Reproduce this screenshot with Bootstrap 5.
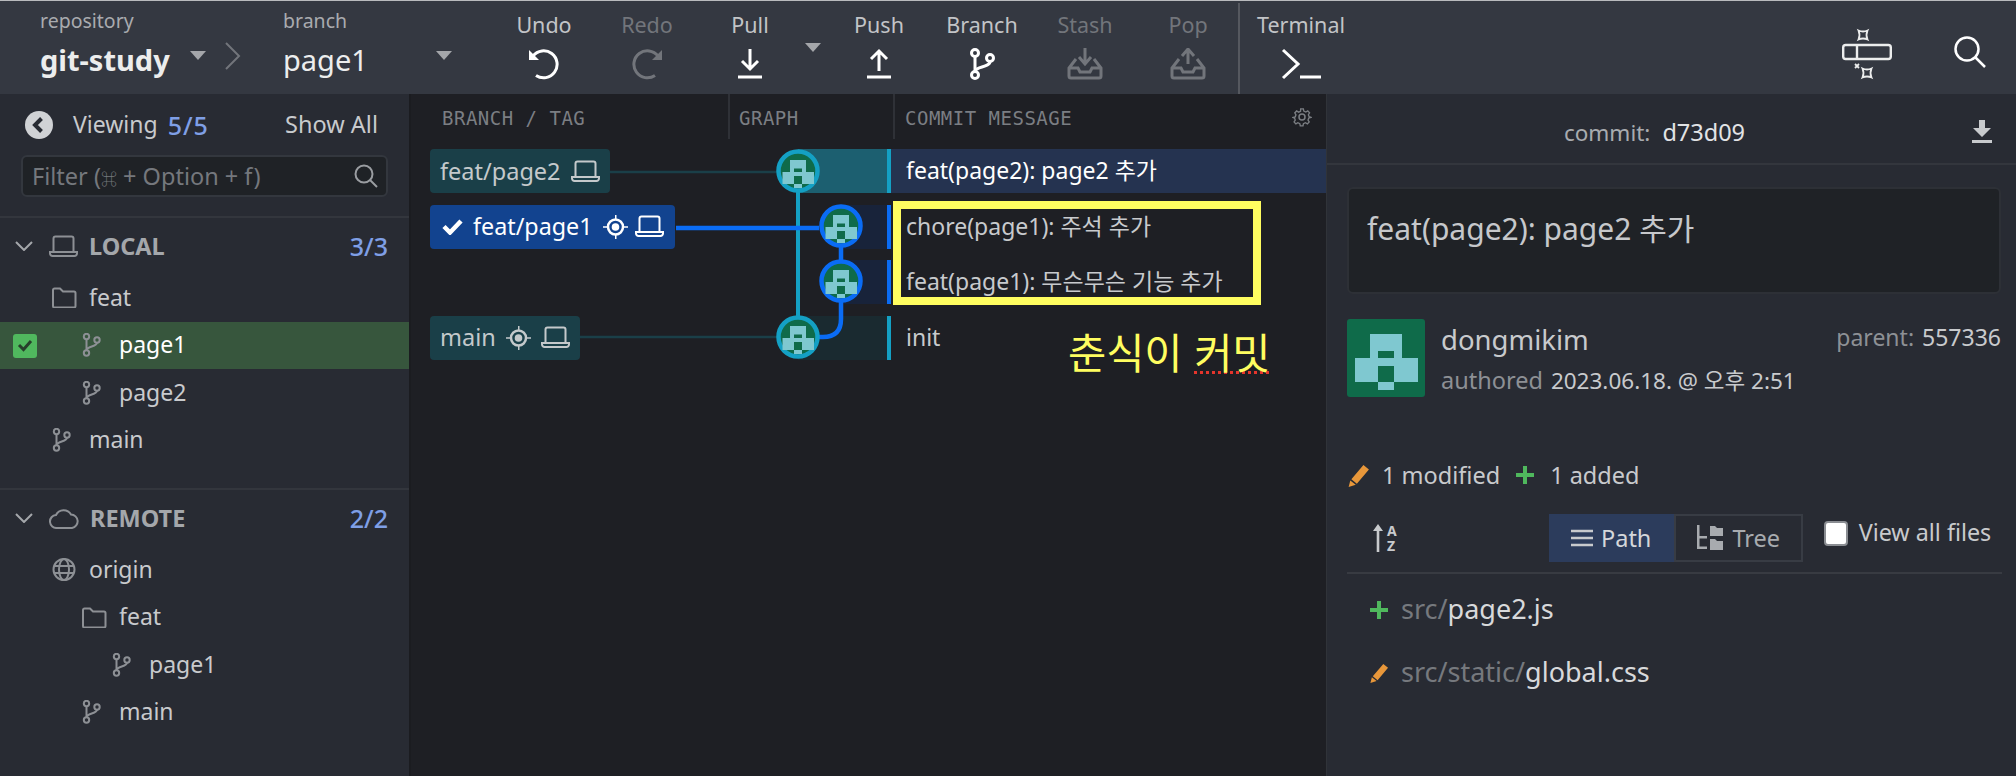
<!DOCTYPE html>
<html lang="ko">
<head>
    <meta charset="UTF-8" />
    <title>git-study</title>
    <link href="https://cdn.jsdelivr.net/npm/bootstrap@5.3.0/dist/css/bootstrap.min.css" rel="stylesheet" />
    <style>
        html, body { height: 100%; }
        body {
            background: #1e1f24;
            color: #c8cacd;
            font-family: "Noto Sans", "Noto Sans CJK KR", sans-serif;
            font-size: 23px;
            line-height: 1.2;
            overflow: hidden;
        }
        svg { display: block; flex: none; }
        .app-shell { height: 776px; }

        /* toolbar */
        .top-bar { height: 94px; background: #343841; padding-left: 40px; border-top: 1px solid #b9babd; }
        .repo-box { width: 243px; padding-top: 8px; }
        .branch-box { width: 209.5px; padding-top: 8px; }
        .sel-label { font-size: 19.5px; color: #a9abaf; line-height: 24px; }
        .sel-value { font-size: 29px; color: #eceded; line-height: 37px; margin-top: 8px; white-space: nowrap; }
        .sel-caret { width: 0; height: 0; border-left: 8px solid transparent; border-right: 8px solid transparent; border-top: 9px solid #a4a6aa; }
        .repo-caret { margin-left: 20px; }
        .repo-arrow { margin-left: 19px; }
        .branch-caret { margin-left: auto; margin-right: 41px; }
        .tool-btn { width: 103px; padding-top: 11px; color: #c2c4c7; font-size: 21.5px; line-height: 26px; }
        .tool-btn svg { margin-top: 10px; }
        .tool-off { color: #72757b; }
        .caret-box { width: 26px; padding: 42px 4px 0 0; }
        .tool-sep { width: 2px; background: #55585f; margin: 2px 0 0 -1.5px; }
        .term-btn { width: 122px; }
        .top-right { margin-left: auto; padding: 8px 30px 0 0; gap: 62px; }

        /* sidebar */
        .side-panel { width: 411px; background: #282b33; flex: none; border-right: 2px solid #1b1c20; }
        .view-row { height: 61px; padding: 0 31px 0 25px; }
        .show-all { font-size: 23.5px; }
        .count-txt { color: #7f9fe6; font-size: 25px; font-weight: 500; }
        .view-count { margin-left: 10px; letter-spacing: 1px; }
        .filter-box { height: 42px; margin: 0 21px; background: #1f2226; border: 2px solid #33373e; border-radius: 6px; padding: 0 8px 0 9px; color: #75787d; font-size: 23.5px; }
        .filter-key { font-size: 16px; }
        .side-sep { height: 2px; background: #33363d; }
        .side-top { margin-top: 19px; }
        .side-head { height: 56px; padding: 0 21px 0 15px; color: #a4a7ab; font-weight: 700; font-size: 23.5px; }
        .head-ico { color: #8d9095; margin-left: 16px; }
        .head-txt { margin-left: 11px; }
        .side-item { height: 47.5px; color: #c8cacd; }
        .side-sel { background: #37563d; color: #fff; position: relative; }
        .side-check { position: absolute; left: 13px; top: 12px; width: 24px; height: 24px; border-radius: 3px; background: #50b85e; }
        .lv-1 { padding-left: 52px; }
        .lv-2 { padding-left: 82px; }
        .lv-3 { padding-left: 112px; }
        .item-ico { width: 37px; flex: none; }
        .side-gap { height: 24px; }

        /* graph */
        .graph-panel { width: 915px; flex: none; position: relative; background: #1e1f24; }
        .col-head { height: 55px; color: #7b7e83; font-family: "DejaVu Sans Mono", "Liberation Mono", monospace; font-size: 19px; letter-spacing: .5px; }
        .col-branch { width: 317px; padding: 13px 0 0 31px; }
        .col-graph { width: 165px; padding: 13px 0 0 9px; border-left: 2px solid #2f3137; height: 45px; }
        .col-msg { flex: 1; padding: 13px 14px 0 10px; border-left: 2px solid #2f3137; height: 45px; }
        .commit-row { height: 44px; margin-bottom: 11.5px; }
        .ref-cell { width: 317px; padding-left: 19px; flex: none; }
        .ref-tag { height: 44px; padding: 0 10px; border-radius: 4px; background: #1a3f48; color: #c4c9cb; font-size: 23.5px; gap: 10px; }
        .ref-active { background: #12438f; color: #fff; padding: 0 11px 0 12px; font-size: 23.3px; }
        .ref-laptop { margin-left: -3px; }
        .stripe-cell { width: 163px; flex: none; height: 44px; }
        .stripe { height: 44px; border-right: 4px solid #14a0c4; }
        .stripe-cur { margin-left: 70px; background: #1c5f70; }
        .stripe-off { margin-left: 70px; background: #1a2a30; }
        .stripe-blue { margin-left: 113px; background: #18233a; border-right-color: #0a6cf5; }
        .msg-cell { flex: 1; padding-left: 15px; font-size: 23px; color: #c8cacd; height: 44px; }
        .msg-on { background: #253350; color: #fff; }
        .graph-lines { position: absolute; left: 0; top: 0; pointer-events: none; }
        .note-box { position: absolute; left: 482px; top: 107px; width: 368px; height: 104px; border: 8px solid #fffd60; }
        .note-txt { position: absolute; left: 657px; top: 232px; color: #fffd60; font-size: 41.5px; line-height: 50px; font-family: "Noto Sans CJK KR", sans-serif; white-space: nowrap; }
        .note-typo { text-decoration: underline dotted #e5352c 3px; text-underline-offset: 2px; }

        /* detail */
        .detail-panel { flex: 1; background: #282b33; border-left: 1px solid #303339; }
        .commit-bar { height: 71px; color: #a8abaf; font-size: 22.5px; position: relative; border-bottom: 2px solid #33363d; padding: 8px 34px 0 0; }
        .commit-bar b { font-weight: 400; font-size: 23.5px; color: #e2e3e5; margin-left: 12px; }
        .dl-ico { position: absolute; right: 24px; top: 26px; }
        .msg-box { height: 107px; margin: 22px 15px 0 20px; background: #1f2226; border: 2px solid #2d3036; border-radius: 6px; padding: 22px 18px; font-size: 30px; color: #c6c8cb; }
        .author-row { margin: 25px 15px 0 20px; height: 78px; position: relative; }
        .avatar-big { width: 78px; height: 78px; border-radius: 3px; flex: none; }
        .author-info { margin-left: 16px; }
        .author-name { font-size: 27.5px; line-height: 32px; margin-top: 5px; }
        .author-date { font-size: 22.5px; line-height: 30px; margin-top: 9px; }
        .dim-txt { color: #8d9095; }
        .author-date .dim-txt { font-size: 23.5px; }
        .parent-txt { position: absolute; right: 0; top: 4px; font-size: 23px; line-height: 28px; }
        .stat-row { margin: 63px 0 0 20px; height: 30px; font-size: 23.5px; }
        .view-bar { height: 48px; margin: 24px 15px 0 46px; position: relative; }
        .sort-az { font-size: 14px; font-weight: 700; line-height: 15px; margin-left: 4px; color: #c8cacd; }
        .path-group { margin-left: 152px; height: 48px; width: 254px; font-size: 23.5px; }
        .path-on { width: 125px; background: #2c3c5c; color: #d5d7da; gap: 8px; }
        .path-off { flex: 1; border: 2px solid #383c44; color: #a8abaf; gap: 8px; }
        .view-check { width: 24px; height: 25px; background: #fff; border: 2px solid #8a8d92; border-radius: 4px; margin-left: 21px; margin-top: -10px; flex: none; }
        .view-lbl { margin-left: 11px; font-size: 23.3px; margin-top: -10px; white-space: nowrap; }
        .file-sep { height: 2px; background: #383b42; margin: 10px 14px 4px 20px; }
        .file-row { height: 63px; padding-left: 42px; font-size: 27px; color: #d8d9db; gap: 12px; }
        .file-dim { color: #76797e; }
    </style>
</head>
<body>

<svg width="0" height="0" class="position-absolute">
    <defs>
        <g id="ico-branch" fill="none" stroke="currentColor" stroke-width="2">
            <circle cx="4.5" cy="3.5" r="2.7"/><circle cx="4.5" cy="20" r="2.7"/><circle cx="15" cy="7" r="2.7"/>
            <path d="M4.5 6.2V17.3M15 9.7c0 4-10.5 3.6-10.5 7.6"/>
        </g>
        <g id="ico-laptop" fill="none" stroke="currentColor" stroke-width="2">
            <path d="M4.5 16V3.5a2 2 0 0 1 2-2h16a2 2 0 0 1 2 2V16"/>
            <path d="M1 17h27v1.5a2.5 2.5 0 0 1-2.5 2.5H3.5a2.5 2.5 0 0 1-2.5-2.5z"/>
        </g>
        <g id="ico-target" fill="currentColor">
            <path d="M12 0h1.5v5h-1.5zM12 19h1.5v5h-1.5zM0 11.2h5v1.6h-5zM20 11.2h5v1.6h-5z"/>
            <circle cx="12.5" cy="12" r="7.5" fill="none" stroke="currentColor" stroke-width="2.5"/>
            <circle cx="12.5" cy="12" r="3.8" />
        </g>
        <g id="ico-folder" fill="none" stroke="currentColor" stroke-width="2">
            <path d="M1 19V3a1.5 1.5 0 0 1 1.5-1.5h5.5l3 3h11a1.5 1.5 0 0 1 1.5 1.5v13a1.5 1.5 0 0 1-1.5 1.5h-19.500a1.5 1.5 0 0 1-1.5-1.5z"/>
        </g>
        <g id="ico-identicon">
            <path fill="#7fc8d0" d="M23 15h32v24h-32zM8 39h63v24h-63zM31 63h16v8h-16z"/>
            <path fill="#0f6b4a" d="M31 32h16v7h-16zM31 47h16v16h-16z"/>
        </g>
        <g id="ico-pencil" fill="#e8973a">
            <path d="M15 1l5 4-11 13-5-4zM3 15l5 4-6.5 2z"/>
        </g>
        <g id="ico-plus" fill="#4fb85d">
            <path d="M7 0h4v7h7v4h-7v7h-4v-7h-7v-4h7z"/>
        </g>
    </defs>
</svg>

<div class="app-shell d-flex flex-column">
    <header class="top-bar d-flex flex-shrink-0">
        <div class="repo-box">
            <div class="sel-label">repository</div>
            <div class="d-flex align-items-center">
                <div class="sel-value fw-bold">git-study</div>
                <div class="sel-caret repo-caret"></div>
                <svg class="repo-arrow" width="16" height="28" viewBox="0 0 16 28" fill="none" stroke="#72757b" stroke-width="2"><path d="M1 1l13 13L1 27"/></svg>
            </div>
        </div>
        <div class="branch-box">
            <div class="sel-label">branch</div>
            <div class="d-flex align-items-center">
                <div class="sel-value">page1</div>
                <div class="sel-caret branch-caret"></div>
            </div>
        </div>
        <div class="tool-btn d-flex flex-column align-items-center">Undo
            <svg width="34" height="32" viewBox="0 0 34 32" fill="none" stroke="#fff" stroke-width="3"><path d="M6 8A13.5 13.5 0 1 1 9 27.5"/><path d="M2 2v10h10z" fill="#fff" stroke="none"/></svg>
        </div>
        <div class="tool-btn tool-off d-flex flex-column align-items-center">Redo
            <svg width="34" height="32" viewBox="0 0 34 32" fill="none" stroke="#72757b" stroke-width="3"><path d="M28 8A13.5 13.5 0 1 0 25 27.5"/><path d="M32 2v10h-10z" fill="#72757b" stroke="none"/></svg>
        </div>
        <div class="tool-btn d-flex flex-column align-items-center">Pull
            <svg width="24" height="32" viewBox="0 0 24 32" fill="none" stroke="#fff" stroke-width="3"><path d="M12 1v20M4 13l8 8 8-8M0 29h24"/></svg>
        </div>
        <div class="caret-box d-flex justify-content-center"><div class="sel-caret"></div></div>
        <div class="tool-btn d-flex flex-column align-items-center">Push
            <svg width="24" height="32" viewBox="0 0 24 32" fill="none" stroke="#fff" stroke-width="3"><path d="M12 23V3M4 11l8-8 8 8M0 29h24"/></svg>
        </div>
        <div class="tool-btn d-flex flex-column align-items-center">Branch
            <svg width="26" height="32" viewBox="0 0 26 32" fill="none" stroke="#fff" stroke-width="3"><circle cx="6" cy="5" r="3.5"/><circle cx="6" cy="27" r="3.5"/><circle cx="21" cy="10" r="3.5"/><path d="M6 8.5v15M21 13.5c0 6-15 5-15 10"/></svg>
        </div>
        <div class="tool-btn tool-off d-flex flex-column align-items-center">Stash
            <svg width="36" height="32" viewBox="0 0 36 32" fill="none" stroke="#72757b" stroke-width="3"><path d="M18 0v14M12 9l6 7 6-7" /><path d="M9 11l-7 9v8a2 2 0 0 0 2 2h28a2 2 0 0 0 2-2v-8l-7-9M2 20h9l2 4h10l2-4h9"/></svg>
        </div>
        <div class="tool-btn tool-off d-flex flex-column align-items-center">Pop
            <svg width="36" height="32" viewBox="0 0 36 32" fill="none" stroke="#72757b" stroke-width="3"><path d="M18 16V2M12 8l6-7 6 7" /><path d="M9 11l-7 9v8a2 2 0 0 0 2 2h28a2 2 0 0 0 2-2v-8l-7-9M2 20h9l2 4h10l2-4h9"/></svg>
        </div>
        <div class="tool-sep"></div>
        <div class="tool-btn term-btn d-flex flex-column align-items-center">Terminal
            <svg width="40" height="32" viewBox="0 0 40 32" fill="none" stroke="#fff" stroke-width="3"><path d="M2 2l15 14L2 30M19 29h21"/></svg>
        </div>
        <div class="top-right d-flex align-items-center">
            <svg width="50" height="60" viewBox="0 0 50 60" fill="none" stroke="#eceded"><rect x="1.2" y="23" width="47.6" height="14" rx="2.5" stroke-width="2.4"/><path d="M15 23v14" stroke-width="2.4"/><path d="M16.5 8.500q4.500 2 9 0q-2 4.500 0 9q-4.500-2-9 0q2-4.500 0-9z" stroke-width="1.8"/><path d="M20.5 46.500q4.500 2 9 0q-2 4.500 0 9q-4.500-2-9 0q2-4.500 0-9z" stroke-width="1.8"/><path d="M13 42l4 4M17 42l-4 4" stroke-width="1.8"/></svg>
            <svg width="32" height="32" viewBox="0 0 32 32" fill="none" stroke="#fff" stroke-width="2.5"><circle cx="13" cy="13" r="11.5"/><path d="M21 21l10 10"/></svg>
        </div>
    </header>

    <div class="d-flex flex-grow-1">
        <aside class="side-panel">
            <div class="view-row d-flex align-items-center">
                <svg width="28" height="28" viewBox="0 0 28 28"><circle cx="14" cy="14" r="14" fill="#d0d2d5"/><path d="M16.5 7.5L10 14l6.5 6.5" fill="none" stroke="#282b33" stroke-width="4"/></svg>
                <span class="ms-3 ps-1">Viewing</span><span class="count-txt view-count">5/5</span>
                <span class="ms-auto show-all">Show All</span>
            </div>
            <div class="filter-box d-flex align-items-center">
                <span>Filter (<span class="filter-key">⌘</span> + Option + f)</span>
                <svg class="ms-auto" width="24" height="24" viewBox="0 0 24 24" fill="none" stroke="#9a9da1" stroke-width="2"><circle cx="10" cy="10" r="8.5"/><path d="M16 16l7 7"/></svg>
            </div>
            <div class="side-sep side-top"></div>
            <div class="side-head d-flex align-items-center">
                <svg width="18" height="10" viewBox="0 0 18 10" fill="none" stroke="#a4a7ab" stroke-width="2"><path d="M1 1l8 8 8-8"/></svg>
                <svg class="head-ico" width="29" height="22" viewBox="0 0 29 22"><use href="#ico-laptop"/></svg>
                <span class="head-txt">LOCAL</span>
                <span class="count-txt ms-auto">3/3</span>
            </div>
            <div class="side-item lv-1 d-flex align-items-center">
                <svg class="item-ico dim-txt" height="21" viewBox="0 0 37 21"><use href="#ico-folder"/></svg>feat
            </div>
            <div class="side-item side-sel lv-2 d-flex align-items-center">
                <span class="side-check d-flex align-items-center justify-content-center">
                    <svg width="16" height="13" viewBox="0 0 16 13" fill="none" stroke="#27402b" stroke-width="3"><path d="M2 6l4.5 4.5L14 2"/></svg>
                </span>
                <svg class="item-ico dim-txt" height="24" viewBox="0 0 37 24"><use href="#ico-branch"/></svg>page1
            </div>
            <div class="side-item lv-2 d-flex align-items-center">
                <svg class="item-ico dim-txt" height="24" viewBox="0 0 37 24"><use href="#ico-branch"/></svg>page2
            </div>
            <div class="side-item lv-1 d-flex align-items-center">
                <svg class="item-ico dim-txt" height="24" viewBox="0 0 37 24"><use href="#ico-branch"/></svg>main
            </div>
            <div class="side-gap"></div>
            <div class="side-sep"></div>
            <div class="side-head d-flex align-items-center">
                <svg width="18" height="10" viewBox="0 0 18 10" fill="none" stroke="#a4a7ab" stroke-width="2"><path d="M1 1l8 8 8-8"/></svg>
                <svg class="head-ico" width="30" height="21" viewBox="0 0 30 21" fill="none" stroke="currentColor" stroke-width="2"><path d="M8 20a6.5 6.5 0 0 1-1-13A8.5 8.5 0 0 1 22 6.5 6.800 6.800 0 0 1 23 20z"/></svg>
                <span class="head-txt">REMOTE</span>
                <span class="count-txt ms-auto">2/2</span>
            </div>
            <div class="side-item lv-1 d-flex align-items-center">
                <svg class="item-ico dim-txt" height="23" viewBox="0 0 37 23" fill="none" stroke="currentColor" stroke-width="2"><circle cx="12" cy="11.5" r="10.5"/><ellipse cx="12" cy="11.5" rx="5" ry="10.5"/><path d="M2 8h20M2 15h20"/></svg>origin
            </div>
            <div class="side-item lv-2 d-flex align-items-center">
                <svg class="item-ico dim-txt" height="21" viewBox="0 0 37 21"><use href="#ico-folder"/></svg>feat
            </div>
            <div class="side-item lv-3 d-flex align-items-center">
                <svg class="item-ico dim-txt" height="24" viewBox="0 0 37 24"><use href="#ico-branch"/></svg>page1
            </div>
            <div class="side-item lv-2 d-flex align-items-center">
                <svg class="item-ico dim-txt" height="24" viewBox="0 0 37 24"><use href="#ico-branch"/></svg>main
            </div>
        </aside>

        <main class="graph-panel">
            <div class="col-head d-flex">
                <div class="col-branch">BRANCH / TAG</div>
                <div class="col-graph">GRAPH</div>
                <div class="col-msg d-flex justify-content-between">COMMIT MESSAGE
                    <svg width="20" height="20" viewBox="0 0 20 20" fill="none" stroke="#7b7e83" stroke-width="1.5"><circle cx="10" cy="10" r="3"/><path d="M8.5 1h3l.5 2.5 2.2 1 2.2-1.3 2 2.2-1.3 2.1.8 2.2L20 10.5v0l-2.5.7-.8 2.2 1.3 2.1-2 2.2-2.2-1.3-2.2 1-.5 2.5h-3l-.5-2.5-2.2-1-2.2 1.3-2-2.2 1.3-2.1-.8-2.2L0 10.5v0l2.5-.7.8-2.2L2 5.5l2-2.2 2.2 1.3 2.2-1z" transform="translate(1 1) scale(.9)"/></svg>
                </div>
            </div>
            <div class="commit-row d-flex">
                <div class="ref-cell"><span class="ref-tag d-inline-flex align-items-center">feat/page2
                    <svg width="29" height="23" viewBox="0 0 29 23"><use href="#ico-laptop"/></svg></span></div>
                <div class="stripe-cell"><div class="stripe stripe-cur"></div></div>
                <div class="msg-cell msg-on d-flex align-items-center">feat(page2): page2 추가</div>
            </div>
            <div class="commit-row d-flex">
                <div class="ref-cell"><span class="ref-tag ref-active d-inline-flex align-items-center">
                    <svg width="21" height="17" viewBox="0 0 21 17" fill="none" stroke="#fff" stroke-width="4.5"><path d="M2 8.5l6 6L19 3"/></svg>
                    <span>feat/page1</span>
                    <svg width="25" height="24" viewBox="0 0 25 24"><use href="#ico-target"/></svg>
                    <svg class="ref-laptop" width="29" height="23" viewBox="0 0 29 23"><use href="#ico-laptop"/></svg></span></div>
                <div class="stripe-cell"><div class="stripe stripe-blue"></div></div>
                <div class="msg-cell d-flex align-items-center">chore(page1): 주석 추가</div>
            </div>
            <div class="commit-row d-flex">
                <div class="ref-cell"></div>
                <div class="stripe-cell"><div class="stripe stripe-blue"></div></div>
                <div class="msg-cell d-flex align-items-center">feat(page1): 무슨무슨 기능 추가</div>
            </div>
            <div class="commit-row d-flex">
                <div class="ref-cell"><span class="ref-tag d-inline-flex align-items-center">main
                    <svg width="25" height="24" viewBox="0 0 25 24"><use href="#ico-target"/></svg>
                    <svg width="29" height="23" viewBox="0 0 29 23"><use href="#ico-laptop"/></svg></span></div>
                <div class="stripe-cell"><div class="stripe stripe-off"></div></div>
                <div class="msg-cell d-flex align-items-center">init</div>
            </div>

            <svg class="graph-lines" width="915" height="300" viewBox="0 0 915 300" fill="none">
                <path d="M198 78H366M168 243H366" stroke="#1a3f48" stroke-width="2.5"/>
                <path d="M387 77V243" stroke="#14a0c4" stroke-width="4"/>
                <path d="M265 134H408M430 132V187M430 187V225q0 18-18 18h-6" stroke="#0a6cf5" stroke-width="4.5"/>
                <circle cx="387" cy="77" r="19.5" fill="#0f6b4a" stroke="#14a0c4" stroke-width="4.5"/>
                <use href="#ico-identicon" transform="translate(367.5 58.5) scale(.5)"/>
                <circle cx="430" cy="132" r="19.5" fill="#0f6b4a" stroke="#0a6cf5" stroke-width="4.5"/>
                <use href="#ico-identicon" transform="translate(410.5 113.5) scale(.5)"/>
                <circle cx="430" cy="187" r="19.5" fill="#0f6b4a" stroke="#0a6cf5" stroke-width="4.5"/>
                <use href="#ico-identicon" transform="translate(410.5 168.5) scale(.5)"/>
                <circle cx="387" cy="243" r="19.5" fill="#0f6b4a" stroke="#14a0c4" stroke-width="4.5"/>
                <use href="#ico-identicon" transform="translate(367.5 224.5) scale(.5)"/>
            </svg>
            <div class="note-box"></div>
            <div class="note-txt">춘식이 <span class="note-typo">커밋</span></div>
        </main>

        <section class="detail-panel">
            <div class="commit-bar d-flex align-items-center justify-content-center">commit:<b>d73d09</b>
                <svg class="dl-ico" width="20" height="24" viewBox="0 0 20 24" fill="#c8cacd"><path d="M7 0h6v8h6l-9 9-9-9h6zM0 20h20v3h-20z"/></svg>
            </div>
            <div class="msg-box">feat(page2): page2 추가</div>
            <div class="author-row d-flex">
                <svg class="avatar-big" viewBox="0 0 78 78"><rect width="78" height="78" fill="#0f6b4a"/><use href="#ico-identicon"/></svg>
                <div class="author-info">
                    <div class="author-name">dongmikim</div>
                    <div class="author-date"><span class="dim-txt">authored</span><span class="ms-2">2023.06.18. @ 오후 2:51</span></div>
                </div>
                <div class="parent-txt"><span class="dim-txt">parent:</span><span class="ms-2">557336</span></div>
            </div>
            <div class="stat-row d-flex align-items-center">
                <svg width="23" height="23" viewBox="0 0 21 21"><use href="#ico-pencil"/></svg>
                <span class="ms-2 ps-1">1 modified</span>
                <svg class="ms-3" width="18" height="18" viewBox="0 0 18 18"><use href="#ico-plus"/></svg>
                <span class="ms-3">1 added</span>
            </div>
            <div class="view-bar d-flex align-items-center">
                <div class="d-flex align-items-center">
                    <svg width="10" height="28" viewBox="0 0 10 28" fill="#c8cacd"><path d="M5 0l5 7H6.3v21H3.7V7H0z"/></svg>
                    <div class="sort-az"><div>A</div><div>Z</div></div>
                </div>
                <div class="path-group d-flex">
                    <div class="path-on d-flex align-items-center justify-content-center">
                        <svg width="22" height="18" viewBox="0 0 22 18" fill="none" stroke="#c8cacd" stroke-width="2.5"><path d="M0 2h22M0 9h22M0 16h22"/></svg>Path
                    </div>
                    <div class="path-off d-flex align-items-center justify-content-center">
                        <svg width="28" height="26" viewBox="0 0 28 26" fill="#a8abaf"><path d="M1 0h2.5v11H11v2.5H3.5v8H11V24H1z"/><path d="M14 1h5l2 2h6v8H14zM14 14h5l2 2h6v9H14z"/></svg>Tree
                    </div>
                </div>
                <div class="view-check"></div>
                <div class="view-lbl">View all files</div>
            </div>
            <div class="file-sep"></div>
            <div class="file-row d-flex align-items-center">
                <svg width="20" height="18" viewBox="0 0 18 18"><use href="#ico-plus"/></svg>
                <span><span class="file-dim">src/</span>page2.js</span>
            </div>
            <div class="file-row d-flex align-items-center">
                <svg width="20" height="22" viewBox="0 0 21 21"><use href="#ico-pencil"/></svg>
                <span><span class="file-dim">src/static/</span>global.css</span>
            </div>
        </section>
    </div>
</div>

<script src="https://cdn.jsdelivr.net/npm/bootstrap@5.3.0/dist/js/bootstrap.bundle.min.js"></script>
</body>
</html>
